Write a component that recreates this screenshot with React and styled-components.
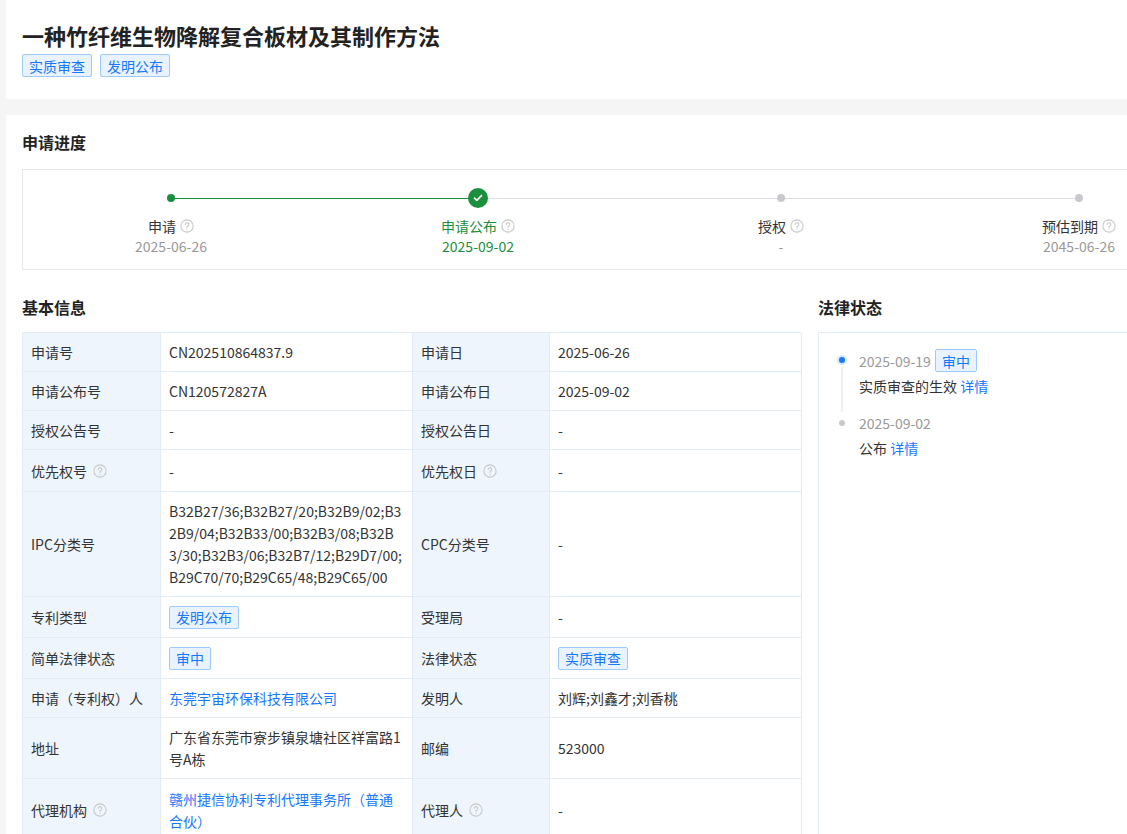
import React from "react";
import styled, { createGlobalStyle } from "styled-components";

const G = createGlobalStyle`
  body{margin:0;background:#f5f5f5;font-family:"Noto Sans CJK SC","Noto Sans",sans-serif;color:#333;overflow:hidden;}
`;
const Page = styled.div`padding-left:6px;width:1140px;`;
const Card = styled.div`background:#fff;padding:${p => p.$pad};margin-bottom:${p => p.$mb || 0}px;`;
const Title = styled.h1`margin:0;font-size:22px;font-weight:700;color:#222;line-height:30px;`;
const Tags = styled.div`display:flex;gap:8px;margin-top:4px;`;
const Tag = styled.span`display:inline-flex;align-items:center;height:23px;padding:0 6px;font-size:14px;font-weight:400;color:#1677ff;background:#e8f3ff;border:1px solid #9ec9fb;border-radius:2px;line-height:1;box-sizing:border-box;`;
const H2 = styled.h2`margin:0;font-size:16px;font-weight:700;color:#222;line-height:22px;`;
const StepsBox = styled.div`margin-top:16px;border:1px solid #e8e8e8;height:101px;box-sizing:border-box;position:relative;display:grid;grid-template-columns:296px 318px 288px 308px;`;
const Line = styled.div`position:absolute;top:28px;height:1px;left:${p => p.$l}px;width:${p => p.$w}px;background:${p => p.$c};`;
const Step = styled.div`display:flex;flex-direction:column;align-items:center;position:relative;`;
const DotWrap = styled.div`height:36px;padding-top:10px;display:flex;align-items:center;justify-content:center;`;
const Dot = styled.div`width:${p => p.$s}px;height:${p => p.$s}px;border-radius:50%;background:${p => p.$c};display:flex;align-items:center;justify-content:center;`;
const StepLabel = styled.div`font-size:14px;color:${p => p.$c || "#333"};display:flex;align-items:center;gap:4px;line-height:20px;`;
const StepDate = styled.div`font-size:14px;font-weight:400;color:${p => p.$c || "#999"};line-height:20px;`;
const Q = ({ s = 14 }) => (
  <svg width={s} height={s} viewBox="0 0 16 16"><circle cx="8" cy="8" r="7" fill="none" stroke="#c8c8c8" strokeWidth="1.2"/><path d="M6 6.2a2 2 0 1 1 2.8 1.8c-.5.3-.8.6-.8 1.2v.6" fill="none" stroke="#c8c8c8" strokeWidth="1.2" strokeLinecap="round"/><circle cx="8" cy="11.8" r=".8" fill="#c8c8c8"/></svg>
);
const Bottom = styled.div`display:flex;gap:17px;margin-top:26px;`;
const Left = styled.div`width:779px;`;
const Right = styled.div`flex:1;`;
const Table = styled.div`margin-top:14px;display:grid;grid-template-columns:138px 252px 137px 252px;border-top:1px solid #e3ebf3;border-left:1px solid #e3ebf3;`;
const Cell = styled.div`border-right:1px solid #e3ebf3;border-bottom:1px solid #e3ebf3;padding:8px 8px;min-height:${p => p.$h || 38}px;box-sizing:border-box;display:flex;align-items:center;gap:6px;font-size:14px;line-height:22px;color:${p => p.$link ? "#1677ff" : "#333"};background:${p => p.$lab ? "#eef5fd" : "#fff"};word-break:break-all;`;
const Panel = styled.div`margin-top:14px;border:1px solid #e3ebf3;height:520px;padding:16px 0 0 20px;`;
const TItem = styled.div`display:flex;gap:14px;position:relative;padding-bottom:${p => p.$pb}px;`;
const TDotCol = styled.div`width:6px;display:flex;flex-direction:column;align-items:center;padding-top:8px;`;
const TDot = styled.div`width:6px;height:6px;border-radius:50%;background:${p => p.$c};box-shadow:${p => p.$g ? "0 0 0 2px #d6e8ff" : "none"};`;
const TLine = styled.div`flex:1;width:2px;background:#eef0f3;margin-top:4px;margin-bottom:-${p => p.$pb}px;`;
const TDate = styled.div`display:flex;align-items:center;gap:4px;font-size:14px;color:#999;line-height:22px;`;
const TText = styled.div`font-size:14px;color:#333;margin-top:4px;line-height:20px;`;
const Link = styled.span`color:#1677ff;`;

const rows = [
  [["申请号"], ["CN202510864837.9"], ["申请日"], ["2025-06-26"]],
  [["申请公布号"], ["CN120572827A"], ["申请公布日"], ["2025-09-02"]],
  [["授权公告号"], ["-"], ["授权公告日"], ["-"]],
  [["优先权号", "q"], ["-"], ["优先权日", "q"], ["-"], 42],
  [["IPC分类号"], ["B32B27/36;B32B27/20;B32B9/02;B32B9/04;B32B33/00;B32B3/08;B32B3/30;B32B3/06;B32B7/12;B29D7/00;B29C70/70;B29C65/48;B29C65/00"], ["CPC分类号"], ["-"], 105],
  [["专利类型"], ["发明公布", "tag"], ["受理局"], ["-"], 41],
  [["简单法律状态"], ["审中", "tag"], ["法律状态"], ["实质审查", "tag"], 41],
  [["申请（专利权）人"], ["东莞宇宙环保科技有限公司", "link"], ["发明人"], ["刘辉;刘鑫才;刘香桃"], 39],
  [["地址"], ["广东省东莞市寮步镇泉塘社区祥富路1号A栋"], ["邮编"], ["523000"], 61],
  [["代理机构", "q"], ["赣州捷信协利专利代理事务所（普通合伙）", "link"], ["代理人", "q"], ["-"], 62],
];

const renderCell = ([t, k], lab, h, key) => (
  <Cell key={key} $lab={lab} $h={h} $link={k === "link"}>
    {k === "tag" ? <Tag>{t}</Tag> : <span>{t}</span>}
    {k === "q" && <Q />}
  </Cell>
);

export default function App() {
  return (
    <Page>
      <G />
      <Card $pad="20px 16px 22px" $mb={16}>
        <Title>一种竹纤维生物降解复合板材及其制作方法</Title>
        <Tags><Tag>实质审查</Tag><Tag>发明公布</Tag></Tags>
      </Card>
      <Card $pad="16px 16px 0" style={{ height: 740 }}>
        <H2>申请进度</H2>
        <StepsBox>
          <Line $l={147} $w={307} $c="#1a8f3c" />
          <Line $l={455} $w={601} $c="#dcdfe6" />
          <Step><DotWrap><Dot $s={8} $c="#1a8f3c" /></DotWrap><StepLabel>申请 <Q /></StepLabel><StepDate>2025-06-26</StepDate></Step>
          <Step><DotWrap><Dot $s={20} $c="#1a8f3c"><svg width="10" height="10" viewBox="0 0 10 10"><path d="M1.5 5.2l2.3 2.2 4.7-4.8" fill="none" stroke="#fff" strokeWidth="1.6" strokeLinecap="round" strokeLinejoin="round"/></svg></Dot></DotWrap><StepLabel $c="#1a8f3c">申请公布 <Q /></StepLabel><StepDate $c="#1a8f3c">2025-09-02</StepDate></Step>
          <Step><DotWrap><Dot $s={8} $c="#c8c9cc" /></DotWrap><StepLabel>授权 <Q /></StepLabel><StepDate>-</StepDate></Step>
          <Step><DotWrap><Dot $s={8} $c="#c8c9cc" /></DotWrap><StepLabel>预估到期 <Q /></StepLabel><StepDate>2045-06-26</StepDate></Step>
        </StepsBox>
        <Bottom>
          <Left>
            <H2>基本信息</H2>
            <Table>
              {rows.map((r, i) => {
                const h = r[4];
                return [0, 1, 2, 3].map(j => renderCell(r[j], j % 2 === 0, h, i + "-" + j));
              })}
            </Table>
          </Left>
          <Right>
            <H2>法律状态</H2>
            <Panel>
              <TItem $pb={16}>
                <TDotCol><TDot $c="#1677ff" $g /><TLine $pb={16} /></TDotCol>
                <div><TDate>2025-09-19 <Tag>审中</Tag></TDate><TText>实质审查的生效 <Link>详情</Link></TText></div>
              </TItem>
              <TItem $pb={0}>
                <TDotCol><TDot $c="#c8c9cc" /></TDotCol>
                <div><TDate>2025-09-02</TDate><TText>公布 <Link>详情</Link></TText></div>
              </TItem>
            </Panel>
          </Right>
        </Bottom>
      </Card>
    </Page>
  );
}
